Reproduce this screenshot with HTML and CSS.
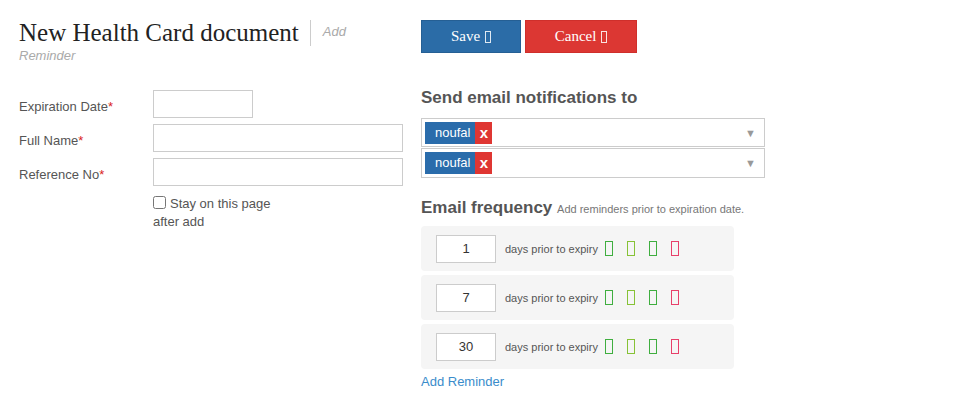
FILE: index.html
```html
<!DOCTYPE html>
<html>
<head>
<meta charset="utf-8">
<link rel="stylesheet" href="styles.css">
</head>
<body>
<div class="page">
  <div class="left">
    <h1 class="title"><span class="main">New Health Card document</span><span class="divider"></span><span class="sub">Add Reminder</span></h1>
    <form class="form">
      <div class="row">
        <label class="label">Expiration Date<span class="req">*</span></label>
        <input class="input short" type="text">
      </div>
      <div class="row">
        <label class="label">Full Name<span class="req">*</span></label>
        <input class="input" type="text">
      </div>
      <div class="row">
        <label class="label">Reference No<span class="req">*</span></label>
        <input class="input" type="text">
      </div>
      <label class="stay"><input class="check" type="checkbox">Stay on this page after add</label>
    </form>
  </div>
  <div class="right">
    <div class="buttons">
      <button class="btn save">Save <span class="tofu"></span></button>
      <button class="btn cancel">Cancel <span class="tofu"></span></button>
    </div>
    <h2 class="heading first">Send email notifications to</h2>
    <div class="select"><span class="tag">noufal</span><span class="tagx">x</span><span class="arrow">&#9660;</span></div>
    <div class="select second"><span class="tag">noufal</span><span class="tagx">x</span><span class="arrow">&#9660;</span></div>
    <h2 class="heading freq">Email frequency <small class="hint">Add reminders prior to expiration date.</small></h2>
    <div class="rem"><input class="days" type="text" value="1"><span class="rtext">days prior to expiry</span><span class="ic g1"></span><span class="ic g2"></span><span class="ic g3"></span><span class="ic r"></span></div>
    <div class="rem"><input class="days" type="text" value="7"><span class="rtext">days prior to expiry</span><span class="ic g1"></span><span class="ic g2"></span><span class="ic g3"></span><span class="ic r"></span></div>
    <div class="rem"><input class="days" type="text" value="30"><span class="rtext">days prior to expiry</span><span class="ic g1"></span><span class="ic g2"></span><span class="ic g3"></span><span class="ic r"></span></div>
    <a class="addlink" href="#">Add Reminder</a>
  </div>
</div>
</body>
</html>
```
FILE: styles.css
```css
* { box-sizing: border-box; }
body {
  margin: 0;
  font-family: "Liberation Sans", Arial, sans-serif;
  font-size: 13px;
  color: #555;
  background: #fff;
}
.page {
  display: flex;
  gap: 18px;
  padding: 18px 19px 0 19px;
}
.left { width: 384px; }
.title {
  margin: 0;
  font-family: "Liberation Sans", Arial, sans-serif;
  font-weight: normal;
  font-size: 13px;
  line-height: 24px;
}
.main {
  font-family: "Liberation Serif", "Times New Roman", serif;
  font-size: 25px;
  line-height: 30px;
  color: #222;
}
.divider {
  display: inline-block;
  width: 0;
  height: 26px;
  border-left: 1px solid #ccc;
  margin: 0 12px 0 11px;
  vertical-align: -5px;
}
.sub {
  position: relative;
  top: -5px;
  font-style: italic;
  font-size: 13px;
  color: #aaa;
}
.form { margin-top: 17px; }
.row {
  display: flex;
  align-items: center;
  margin-bottom: 6px;
}
.label {
  width: 134px;
  padding-top: 4px;
  font-size: 13px;
  color: #555;
}
.req { color: #d9231c; }
.input {
  width: 250px;
  height: 28px;
  border: 1px solid #ccc;
  padding: 4px 6px;
  margin: 0;
  font-size: 13px;
}
.input.short { width: 100px; }
.stay {
  display: block;
  width: 125px;
  margin: 9px 0 0 134px;
  line-height: 18px;
  font-size: 13px;
  color: #555;
}
.check {
  width: 13px;
  height: 13px;
  margin: 0 4px 0 0;
  vertical-align: -1px;
}
.right { width: 344px; }
.buttons {
  display: flex;
  gap: 4px;
  margin-top: 2px;
}
.btn {
  height: 33px;
  border: 1px solid transparent;
  font-family: "Liberation Serif", "Times New Roman", serif;
  font-size: 15px;
  color: #fff;
  padding: 0;
  cursor: pointer;
}
.save { width: 100px; background: #2b6ca7; border-color: #255f94; }
.cancel { width: 112px; background: #dc3733; border-color: #cf2f2b; }
.tofu {
  display: inline-block;
  width: 6px;
  height: 12px;
  border: 1px solid rgba(255,255,255,0.85);
  vertical-align: -2px;
  margin-left: 1px;
}
.heading {
  margin: 0;
  font-size: 17px;
  line-height: 20px;
  font-weight: bold;
  color: #555;
}
.heading.first { margin-top: 35px; margin-bottom: 10px; }
.heading.freq { margin-top: 20px; margin-bottom: 7px; }
.hint {
  font-size: 11px;
  font-weight: normal;
  color: #777;
}
.select {
  display: flex;
  align-items: center;
  width: 344px;
  height: 29px;
  border: 1px solid #ccc;
  padding: 0 3px;
}
.select.second { margin-top: 1px; height: 30px; }
.tag {
  background: #2a6cab;
  color: #fff;
  height: 22px;
  line-height: 22px;
  padding: 0 5px 0 10px;
  font-size: 13px;
}
.tagx {
  background: #df3632;
  color: #fff;
  height: 22px;
  line-height: 22px;
  width: 17px;
  text-align: center;
  font-size: 15px;
  font-weight: bold;
}
.arrow {
  margin-left: auto;
  margin-right: 5px;
  font-size: 11px;
  color: #999;
}
.rem {
  display: flex;
  align-items: center;
  width: 313px;
  height: 45px;
  background: #f5f5f5;
  border-radius: 4px;
  padding: 0 15px;
  margin-bottom: 4px;
}
.days {
  width: 60px;
  height: 28px;
  border: 1px solid #ccc;
  text-align: center;
  font-size: 13px;
  color: #333;
  margin: 0 9px 0 0;
  padding: 0;
}
.rtext {
  font-size: 11px;
  color: #555;
  margin-right: 7px;
}
.ic {
  display: inline-block;
  width: 8px;
  height: 15px;
  border: 1px solid #5cb85c;
  margin-right: 14px;
}
.ic.g1 { border-color: #3fae3f; }
.ic.g2 { border-color: #86c236; }
.ic.g3 { border-color: #3fae3f; }
.ic.r { border-color: #e8406a; }
.addlink {
  display: block;
  margin-top: 5px;
  color: #3a8ccb;
  text-decoration: none;
  font-size: 13px;
}
```
